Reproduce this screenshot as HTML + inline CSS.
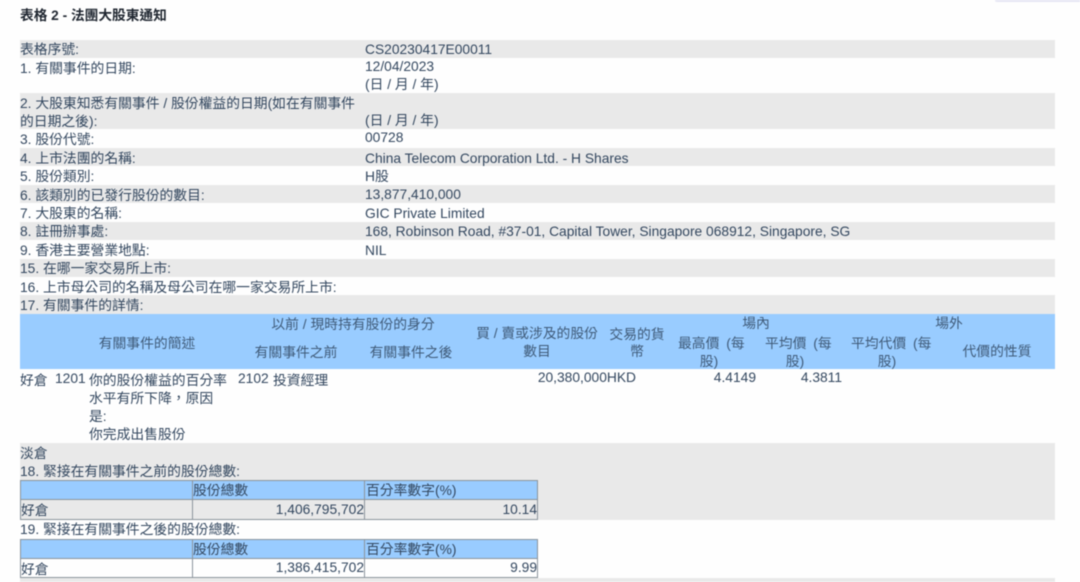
<!DOCTYPE html>
<html lang="zh-Hant">
<head>
<meta charset="utf-8">
<title>表格 2 - 法團大股東通知</title>
<style>
html,body{margin:0;padding:0;background:#fff}
#p{position:relative;width:1080px;height:582px;overflow:hidden;background:#fefefe;font:13.8px/18px "Liberation Sans","Noto Sans CJK TC",sans-serif;color:#33475f}
#f{position:absolute;inset:0;filter:blur(.45px)}
.g,.b,.l{position:absolute}
.g{left:20px;width:1035px;background:#e9e9e9}
.b{background:#99ccff}
.l{background:#8b949c}
.t{position:absolute;white-space:nowrap;height:18px;margin-top:1px}
.c{transform:translateX(-50%)}
.h{color:#3f5a78}
.w{word-spacing:3px}
</style>
</head>
<body>
<div id="p"><div id="f">
<div style="position:absolute;left:995px;top:0;width:85px;height:2px;background:#e6e6f4;border-radius:0 0 0 4px"></div>

<div class="g" style="top:40px;height:18px"></div>
<div class="g" style="top:93px;height:36px"></div>
<div class="g" style="top:148px;height:18px"></div>
<div class="g" style="top:185px;height:18px"></div>
<div class="g" style="top:222px;height:18px"></div>
<div class="g" style="top:259px;height:18px"></div>
<div class="g" style="top:295px;height:19px"></div>
<div class="b" style="left:20px;top:314px;width:1035px;height:55px"></div>
<div class="g" style="top:443px;height:77px"></div>
<div class="g" style="top:578px;height:4px"></div>

<div class="t" style="left:20px;top:6px;font-weight:bold;color:#1f2630;font-size:13.7px">表格 2 - 法團大股東通知</div>

<div class="t" style="left:20px;top:40px">表格序號:</div>
<div class="t" style="left:365px;top:40px">CS20230417E00011</div>
<div class="t" style="left:20px;top:59px">1. 有關事件的日期:</div>
<div class="t" style="left:365px;top:57px">12/04/2023</div>
<div class="t" style="left:365px;top:75px">(日 / 月 / 年)</div>
<div class="t" style="left:20px;top:94px">2. 大股東知悉有關事件 / 股份權益的日期(如在有關事件</div>
<div class="t" style="left:20px;top:112px">的日期之後):</div>
<div class="t" style="left:365px;top:111px">(日 / 月 / 年)</div>
<div class="t" style="left:20px;top:130px">3. 股份代號:</div>
<div class="t" style="left:365px;top:128px">00728</div>
<div class="t" style="left:20px;top:149px">4. 上市法團的名稱:</div>
<div class="t" style="left:365px;top:149px">China Telecom Corporation Ltd. - H Shares</div>
<div class="t" style="left:20px;top:167px">5. 股份類別:</div>
<div class="t" style="left:365px;top:167px">H股</div>
<div class="t" style="left:20px;top:186px">6. 該類別的已發行股份的數目:</div>
<div class="t" style="left:365px;top:185px">13,877,410,000</div>
<div class="t" style="left:20px;top:204px">7. 大股東的名稱:</div>
<div class="t" style="left:365px;top:204px">GIC Private Limited</div>
<div class="t" style="left:20px;top:222px">8. 註冊辦事處:</div>
<div class="t" style="left:365px;top:222px">168, Robinson Road, #37-01, Capital Tower, Singapore 068912, Singapore, SG</div>
<div class="t" style="left:20px;top:241px">9. 香港主要營業地點:</div>
<div class="t" style="left:365px;top:241px">NIL</div>
<div class="t" style="left:20px;top:259px">15. 在哪一家交易所上市:</div>
<div class="t" style="left:20px;top:278px">16. 上市母公司的名稱及母公司在哪一家交易所上市:</div>
<div class="t" style="left:20px;top:296px">17. 有關事件的詳情:</div>

<div class="t h c" style="left:353px;top:315px">以前 / 現時持有股份的身分</div>
<div class="t h c" style="left:147px;top:334px">有關事件的簡述</div>
<div class="t h c" style="left:296px;top:343px">有關事件之前</div>
<div class="t h c" style="left:411px;top:343px">有關事件之後</div>
<div class="t h c" style="left:537px;top:324px">買 / 賣或涉及的股份</div>
<div class="t h c" style="left:537px;top:342px">數目</div>
<div class="t h c" style="left:637px;top:325px">交易的貨</div>
<div class="t h c" style="left:637px;top:342px">幣</div>
<div class="t h c" style="left:756px;top:314px">場內</div>
<div class="t h w" style="left:678px;top:334px">最高價 (每</div>
<div class="t h c" style="left:709px;top:352px">股)</div>
<div class="t h w" style="left:765px;top:334px">平均價 (每</div>
<div class="t h c" style="left:795px;top:352px">股)</div>
<div class="t h w" style="left:851px;top:334px">平均代價 (每</div>
<div class="t h c" style="left:887px;top:352px">股)</div>
<div class="t h c" style="left:949px;top:314px">場外</div>
<div class="t h c" style="left:997px;top:342px">代價的性質</div>

<div class="t" style="left:20px;top:371px">好倉</div>
<div class="t" style="left:55px;top:369px">1201</div>
<div class="t" style="left:89px;top:371px">你的股份權益的百分率</div>
<div class="t" style="left:89px;top:389px">水平有所下降，原因</div>
<div class="t" style="left:89px;top:407px">是:</div>
<div class="t" style="left:89px;top:425px">你完成出售股份</div>
<div class="t" style="left:238px;top:369px">2102</div>
<div class="t" style="left:273px;top:371px">投資經理</div>
<div class="t" style="right:444px;top:368px">20,380,000HKD</div>
<div class="t" style="right:324px;top:368px">4.4149</div>
<div class="t" style="right:238px;top:368px">4.3811</div>

<div class="t" style="left:20px;top:444px">淡倉</div>
<div class="t" style="left:20px;top:462px">18. 緊接在有關事件之前的股份總數:</div>

<div class="b" style="left:20px;top:480px;width:517px;height:19px"></div>
<div class="l" style="left:20px;top:480px;width:517px;height:1px"></div>
<div class="l" style="left:20px;top:499px;width:517px;height:1px"></div>
<div class="l" style="left:20px;top:519px;width:517px;height:1px"></div>
<div class="l" style="left:20px;top:480px;width:1px;height:40px"></div>
<div class="l" style="left:192px;top:480px;width:1px;height:40px"></div>
<div class="l" style="left:364px;top:480px;width:1px;height:40px"></div>
<div class="l" style="left:537px;top:480px;width:1px;height:40px"></div>
<div class="t" style="left:193px;top:481px">股份總數</div>
<div class="t" style="left:366px;top:481px">百分率數字(%)</div>
<div class="t" style="left:21px;top:501px">好倉</div>
<div class="t" style="right:716px;top:500px">1,406,795,702</div>
<div class="t" style="right:543px;top:500px">10.14</div>

<div class="t" style="left:20px;top:520px">19. 緊接在有關事件之後的股份總數:</div>

<div class="b" style="left:20px;top:539px;width:517px;height:19px"></div>
<div class="l" style="left:20px;top:539px;width:517px;height:1px"></div>
<div class="l" style="left:20px;top:558px;width:517px;height:1px"></div>
<div class="l" style="left:20px;top:577px;width:517px;height:1px"></div>
<div class="l" style="left:20px;top:539px;width:1px;height:39px"></div>
<div class="l" style="left:192px;top:539px;width:1px;height:39px"></div>
<div class="l" style="left:364px;top:539px;width:1px;height:39px"></div>
<div class="l" style="left:537px;top:539px;width:1px;height:39px"></div>
<div class="t" style="left:193px;top:540px">股份總數</div>
<div class="t" style="left:366px;top:540px">百分率數字(%)</div>
<div class="t" style="left:21px;top:560px">好倉</div>
<div class="t" style="right:716px;top:558px">1,386,415,702</div>
<div class="t" style="right:543px;top:558px">9.99</div>
</div></div>
</body>
</html>
